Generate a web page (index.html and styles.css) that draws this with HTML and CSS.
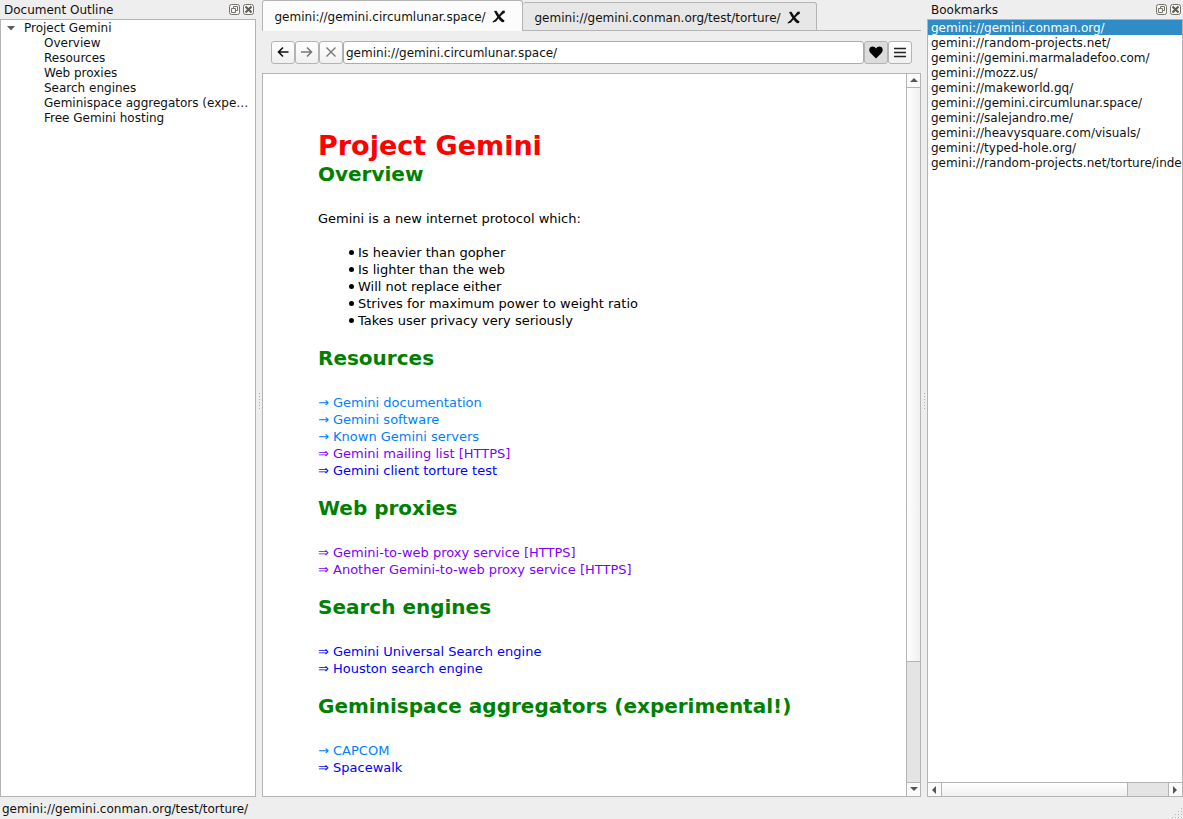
FILE: index.html
```html
<!DOCTYPE html>
<html lang="en">
<head>
<meta charset="utf-8">
<title>Project Gemini</title>
<link rel="stylesheet" href="styles.css">
</head>
<body>
<svg class="defs" width="0" height="0">
  <symbol id="float" viewBox="0 0 11 11"><rect x=".5" y=".5" width="10" height="10" rx="2" fill="#f4f4f4" stroke="#77736d"/><path d="M4.500 4.500v-2h4v4h-2M2.500 4.500h4v4h-4z" fill="none" stroke="#77736d"/></symbol>
  <symbol id="close" viewBox="0 0 11 11"><rect x=".5" y=".5" width="10" height="10" rx="2" fill="#f4f4f4" stroke="#77736d"/><path d="M2.500 2.500l6 6M8.500 2.500l-6 6" stroke="#5f5b55" stroke-width="2"/></symbol>
  <symbol id="tabx" viewBox="0 0 14 14"><path d="M2 1l2.500-.2C6 3.500 8 6.500 10 8.500l2.500 2-.5 1.500-2 .3C7 10 4 5.500 2 1z" fill="#111"/><path d="M12.500.5l.5 2C9 5 6.500 8.500 4 11.500L1 12.500l-.5-.8C4.500 9 8 3.500 10.500.8z" fill="#111"/></symbol>
</svg>
<div class="window">
  <main class="workspace">
    <aside class="dock">
      <header class="dock-title"><span>Document Outline</span><svg class="btn"><use href="#float"/></svg><svg class="btn"><use href="#close"/></svg></header>
      <div class="box outline">
        <div class="root"><svg width="8" height="5"><path d="M0 0h8L4 4.500z" fill="#5e5e5e"/></svg>Project Gemini</div>
        <ul class="tree"><li>Overview</li><li>Resources</li><li>Web proxies</li><li>Search engines</li><li>Geminispace aggregators (expe…</li><li>Free Gemini hosting</li></ul>
      </div>
    </aside>
    <div class="splitter"></div>
    <section class="browser">
      <nav class="tabs">
        <div class="tab active"><span>gemini://gemini.circumlunar.space/</span><svg><use href="#tabx"/></svg></div>
        <div class="tab second"><span>gemini://gemini.conman.org/test/torture/</span><svg><use href="#tabx"/></svg></div>
        <div class="rest"></div>
      </nav>
      <div class="toolbar">
        <div class="tool"><svg viewBox="0 0 22 21"><path d="M16.500 10H6.500M11 5.500L6.500 10l4.500 4.500" fill="none" stroke="#111" stroke-width="1.600"/></svg></div>
        <div class="tool"><svg viewBox="0 0 22 21"><path d="M5 10h10.500M11 5.500l4.500 4.500-4.500 4.500" fill="none" stroke="#777" stroke-width="1.600"/></svg></div>
        <div class="tool"><svg viewBox="0 0 22 21"><path d="M6.500 5.500l9 9M15.500 5.500l-9 9" fill="none" stroke="#777" stroke-width="1.400"/></svg></div>
        <div class="address">gemini://gemini.circumlunar.space/</div>
        <div class="tool pressed"><svg viewBox="0 0 22 21"><path d="M11 16.500L5.500 11C3 8 4.500 4.500 7.500 4.500c1.600 0 2.800.8 3.500 2 .7-1.200 1.900-2 3.500-2 3 0 4.500 3.500 2 6.500z" fill="#000"/></svg></div>
        <div class="tool"><svg viewBox="0 0 22 21"><path d="M5 6.500h12M5 10.500h12M5 14.500h12" stroke="#222" stroke-width="1.300"/></svg></div>
      </div>
      <div class="box viewer">
        <article class="page">
          <h1>Project Gemini</h1>
          <h2>Overview</h2>
          <p>Gemini is a new internet protocol which:</p>
          <ul><li>Is heavier than gopher</li><li>Is lighter than the web</li><li>Will not replace either</li><li>Strives for maximum power to weight ratio</li><li>Takes user privacy very seriously</li></ul>
          <h2>Resources</h2>
          <div class="links"><a class="local">→ Gemini documentation</a><a class="local">→ Gemini software</a><a class="local">→ Known Gemini servers</a><a class="web">⇒ Gemini mailing list [HTTPS]</a><a>⇒ Gemini client torture test</a></div>
          <h2>Web proxies</h2>
          <div class="links"><a class="web">⇒ Gemini-to-web proxy service [HTTPS]</a><a class="web">⇒ Another Gemini-to-web proxy service [HTTPS]</a></div>
          <h2>Search engines</h2>
          <div class="links"><a>⇒ Gemini Universal Search engine</a><a>⇒ Houston search engine</a></div>
          <h2>Geminispace aggregators (experimental!)</h2>
          <div class="links"><a class="local">→ CAPCOM</a><a>⇒ Spacewalk</a></div>
        </article>
        <div class="vscroll">
          <div class="arrow"><svg width="8" height="4"><path d="M0 4h8L4 0z" fill="#555"/></svg></div>
          <div class="thumb"></div><div class="track"></div>
          <div class="arrow last"><svg width="8" height="4"><path d="M0 0h8L4 4z" fill="#555"/></svg></div>
        </div>
      </div>
    </section>
    <div class="splitter"></div>
    <aside class="dock">
      <header class="dock-title right"><span>Bookmarks</span><svg class="btn"><use href="#float"/></svg><svg class="btn"><use href="#close"/></svg></header>
      <div class="box bookmarks">
        <ul><li class="selected">gemini://gemini.conman.org/</li><li>gemini://random-projects.net/</li><li>gemini://gemini.marmaladefoo.com/</li><li>gemini://mozz.us/</li><li>gemini://makeworld.gq/</li><li>gemini://gemini.circumlunar.space/</li><li>gemini://salejandro.me/</li><li>gemini://heavysquare.com/visuals/</li><li>gemini://typed-hole.org/</li><li>gemini://random-projects.net/torture/inde</li></ul>
        <div class="hscroll">
          <div class="arrow"><svg width="4" height="8"><path d="M4 0v8L0 4z" fill="#555"/></svg></div>
          <div class="thumb"></div><div class="track"></div>
          <div class="arrow last"><svg width="4" height="8"><path d="M0 0v8l4-4z" fill="#555"/></svg></div>
        </div>
      </div>
    </aside>
  </main>
  <footer class="status"><span>gemini://gemini.conman.org/test/torture/</span>
    <svg class="grip" width="12" height="12" fill="#b4b4b4"><path d="M10 1h1v1h-1zM7 4h1v1h-1zM10 4h1v1h-1zM4 7h1v1h-1zM7 7h1v1h-1zM10 7h1v1h-1zM1 10h1v1h-1zM4 10h1v1h-1zM7 10h1v1h-1zM10 10h1v1h-1z"/></svg>
  </footer>
</div>
</body>
</html>
```
FILE: styles.css
```css
* { box-sizing: border-box; }
body { margin: 0; background: #eee; color: #111; font: 12px/15px "DejaVu Sans", sans-serif; overflow: hidden; }
ul { list-style: none; margin: 0; padding: 0; }
svg { display: block; flex: none; }
.defs { position: absolute; }
.window { display: flex; flex-direction: column; width: 1183px; height: 819px; }
.workspace { display: grid; grid-template-columns: 256px 6px 659px 6px 256px; height: 797px; }
.dock { display: flex; flex-direction: column; min-width: 0; }
.dock-title { display: flex; align-items: center; height: 19px; padding: 0 2px 0 4px; gap: 3px; }
.dock-title span { flex: 1; padding-top: 2px; }
.btn { width: 11px; height: 11px; }
.box { flex: 1; min-height: 0; background: #fff; border: 1px solid #b4b4b4; }
.outline { padding-top: 1px; }
.root { display: flex; align-items: center; gap: 9px; padding-left: 6px; }
.tree { padding-left: 43px; white-space: nowrap; }
.splitter { align-self: center; justify-self: center; width: 1px; height: 16px; margin-top: 4px; background: repeating-linear-gradient(#b0b0b0 0 1px, transparent 1px 3px); }
.browser { display: flex; flex-direction: column; min-width: 0; }
.tabs { display: flex; align-items: flex-end; height: 31px; }
.tab { display: flex; align-items: center; justify-content: space-between; border: 1px solid #b4b4b4; border-radius: 3px 3px 0 0; }
.tab span { padding-top: 2px; }
.tab svg { width: 14px; height: 14px; }
.active { width: 261px; height: 31px; padding: 1px 16px 0 11.500px; border-bottom: 0; background: #fcfcfc; }
.second { width: 294px; height: 29px; padding: 2px 15px 0 11.500px; border-left: 0; background: #e7e7e7; }
.rest { flex: 1; border-bottom: 1px solid #b4b4b4; }
.toolbar { display: flex; height: 42px; padding: 10px 9px 9px; }
.tool { width: 24px; height: 23px; border: 1px solid #b4b4b4; border-radius: 3px; background: linear-gradient(#fff, #f0f0f0); }
.tool svg { width: 22px; height: 21px; }
.pressed { background: #dcdcdc; }
.address { flex: 1; padding: 4px 2px; background: #fff; border: 1px solid #acacac; border-radius: 3px; }
.viewer { display: flex; color: #000; }
.page { flex: 1; padding: 56px 0 0 55px; font-size: 13px; line-height: 17px; overflow: hidden; white-space: nowrap; }
.page h1 { margin: 0; font-size: 27px; line-height: 32px; color: #f00; }
.page h2 { margin: 17px 0 24px; font-size: 20px; line-height: 24px; color: #008000; }
.page h1 + h2 { margin-top: 0; }
.page p { margin: 0 0 17px; }
.page ul { padding-left: 40px; }
.page li { position: relative; }
.page li::before { content: ""; position: absolute; left: -9px; top: 6px; width: 5px; height: 5px; border-radius: 50%; background: #000; }
.links { display: flex; flex-direction: column; color: #00f; }
.local { color: #0080ff; }
.web { color: #8000ff; }
.vscroll { display: flex; flex-direction: column; width: 14px; border-left: 1px solid #b4b4b4; }
.arrow { display: flex; align-items: center; justify-content: center; background: #fafafa; flex: none; }
.vscroll .arrow { height: 14px; padding-bottom: 2px; border-bottom: 1px solid #b4b4b4; }
.vscroll .last { border-bottom: 0; border-top: 1px solid #b4b4b4; }
.vscroll .thumb { height: 574px; background: linear-gradient(90deg, #fff, #f0f0f0); border-bottom: 1px solid #b4b4b4; }
.track { flex: 1; background: #e4e4e4; }
.bookmarks { display: flex; flex-direction: column; justify-content: space-between; }
.bookmarks ul { padding-bottom: 2px; white-space: nowrap; }
.bookmarks li { height: 15px; padding: 0 0 0 3px; line-height: 17px; }
.selected { background: #308cc6; color: #fff; }
.hscroll { display: flex; height: 14px; border-top: 1px solid #b4b4b4; }
.hscroll .arrow { width: 14px; padding-right: 1px; border-right: 1px solid #b4b4b4; }
.hscroll .last { border-right: 0; border-left: 1px solid #b4b4b4; }
.hscroll .thumb { width: 186px; background: linear-gradient(#fff, #f0f0f0); border-right: 1px solid #b4b4b4; }
.status { display: flex; justify-content: space-between; align-items: flex-end; height: 22px; padding-left: 2px; }
.status span { align-self: center; padding-top: 2px; }
```
